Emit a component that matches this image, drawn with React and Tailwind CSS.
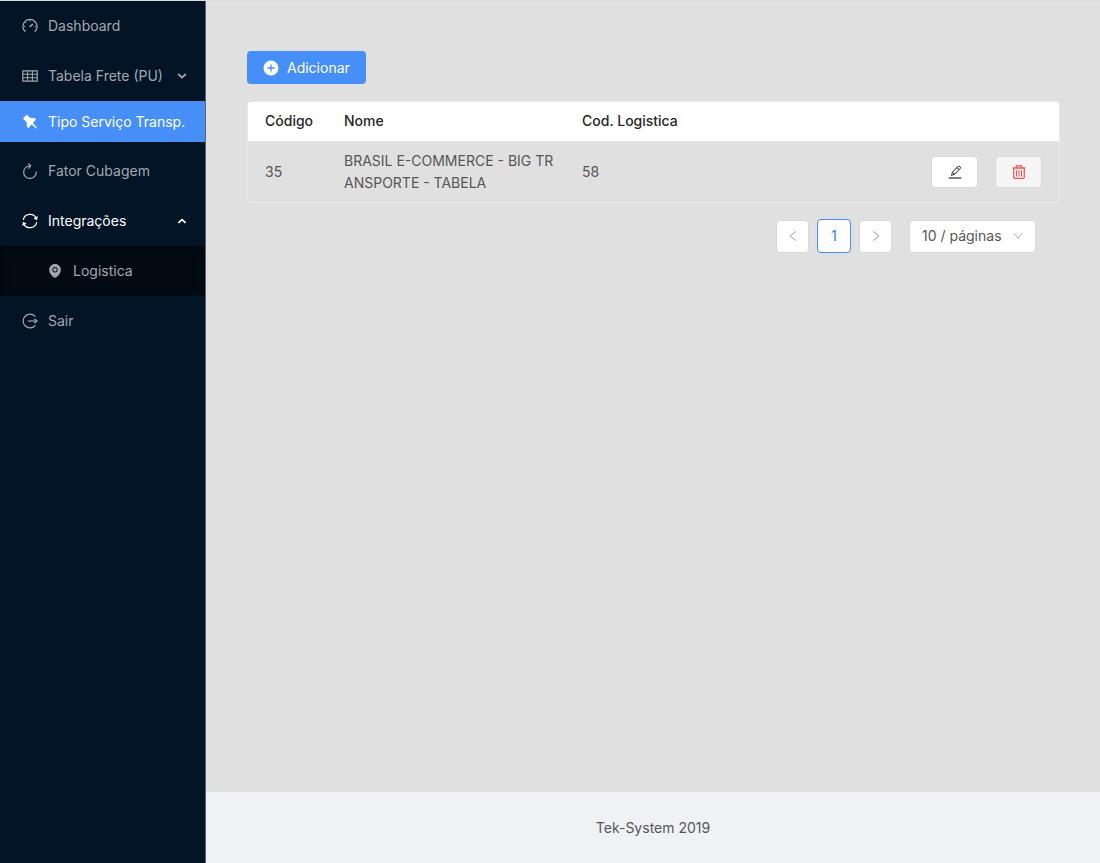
import React, { useState } from 'react';
import { AiFillEnvironment, AiOutlineLeft, AiOutlineRight, AiOutlineDown } from 'react-icons/ai';

const rows = [{ codigo: 35, nome: 'BRASIL E-COMMERCE - BIG TRANSPORTE - TABELA', logistica: 58 }];

function Icon({ children, className = 'size-4' }) {
  return (
    <svg viewBox="0 0 16 16" className={`shrink-0 ${className}`} fill="none" stroke="currentColor" strokeWidth="1.2">
      {children}
    </svg>
  );
}

function DashboardIcon() {
  return (
    <Icon>
      <path d="M3.4 13.9A7.1 7.1 0 1 1 12.6 13.9" />
      <path d="M7.8 8.9L10.8 6" strokeWidth="1.6" />
      <path d="M8 1.8V3.6M1.8 8.5H3.4M12.6 8.5H14.2M3.6 4.1L4.7 5.2M12.4 4.1L11.5 5" strokeWidth="0.9" />
    </Icon>
  );
}

function TableIcon() {
  return (
    <Icon>
      <path d="M0.8 2.8H15.2V13.2H0.8Z" />
      <path d="M0.8 6.2H15.2M0.8 9.7H15.2M5.6 2.8V13.2M10.4 2.8V13.2" strokeWidth="1" />
    </Icon>
  );
}

function PinIcon() {
  return (
    <Icon>
      <path
        d="M5.2 1.1L7.9 3.8L11.8 4.1Q13.8 4.2 13.9 5.4L11 8.9L14.9 13.7L14.2 14.4L9.6 10.6L6.4 13.9Q4.9 13.6 4.8 11.8L4.6 7.9L1.4 4.9Q1 4.2 1.7 3.6L4.1 1.2Q4.7 0.7 5.2 1.1Z"
        fill="currentColor"
        stroke="none"
      />
    </Icon>
  );
}

function ReloadIcon() {
  return (
    <Icon>
      <path d="M14.2 8.6A6.3 6.3 0 1 1 8.6 2.9" />
      <path d="M6.2 0.5L8.8 2.9L6.4 5.5" />
    </Icon>
  );
}

function SyncIcon() {
  return (
    <Icon>
      <path d="M1.3 6.8A6.9 6.9 0 0 1 14.1 4.9" />
      <path d="M14.7 9.2A6.9 6.9 0 0 1 1.9 11.1" />
      <path d="M15.8 3L15 7.2L11.4 5.4ZM0.2 13L1 8.8L4.6 10.6Z" fill="currentColor" stroke="none" />
    </Icon>
  );
}

function LogoutIcon() {
  return (
    <Icon>
      <path d="M13.4 3.6A6.9 6.9 0 1 0 13.4 12.4" />
      <path d="M5.8 8H14.6" />
      <path d="M12.4 5.8L15 8L12.4 10.2" />
    </Icon>
  );
}

function PlusCircleIcon() {
  return (
    <svg viewBox="0 0 16 16" className="size-4 shrink-0">
      <circle cx="8" cy="8" r="7.5" fill="currentColor" />
      <path d="M8 4.4V11.6M4.4 8H11.6" stroke="#478ff8" strokeWidth="1.3" />
    </svg>
  );
}

function EditIcon() {
  return (
    <Icon className="size-3.5">
      <path d="M0.8 14.9H15.2" strokeWidth="1.6" />
      <path d="M4 11.8L5 8.2L11.6 1.6Q12.4 0.9 13.2 1.6L14 2.4Q14.7 3.2 14 4L7.4 10.6Z" />
      <path d="M10.2 3L12.6 5.4M5 8.2L7.4 10.6" />
    </Icon>
  );
}

function TrashIcon() {
  return (
    <Icon className="size-3.5">
      <path d="M0.8 3.4H15.2" strokeWidth="1.6" />
      <path d="M5 3V1H11V3" strokeWidth="1.4" />
      <path d="M2 3.6V14Q2 15.2 3 15.2H13Q14 15.2 14 14V3.6" strokeWidth="1.4" />
      <path d="M5.2 6V13M8 6V13M10.8 6V13" />
    </Icon>
  );
}

function Caret({ up }) {
  return (
    <svg viewBox="0 0 10 10" className="ml-auto size-2.5 shrink-0" fill="none" stroke="currentColor" strokeWidth="1.8">
      <path d={up ? 'M1.4 6.8L5 3.6L8.6 6.8' : 'M1.2 3L5 6.6L8.8 3'} />
    </svg>
  );
}

function MenuLink({ icon, children, className = '' }) {
  return (
    <a href="#" className={`flex items-center gap-2.5 whitespace-nowrap ${className}`}>
      {icon}
      {children}
    </a>
  );
}

export default function App() {
  const [open, setOpen] = useState(true);
  const [pageSize, setPageSize] = useState('10');

  return (
    <div className="flex min-h-screen border-t border-[#dcdedd] bg-[#e0e0e0] font-['Inter','Liberation_Sans',sans-serif] text-sm text-[#565656]">
      {/* Menu lateral */}
      <nav className="w-[206px] shrink-0 border-r border-[#5b6675] bg-[#031427] pt-1 text-[#a3a8af]">
        <MenuLink className="mb-2 h-[42px] pl-[22px]" icon={<DashboardIcon />}>
          Dashboard
        </MenuLink>
        <button type="button" className="mb-1 flex h-[42px] w-full items-center gap-2.5 pr-[18px] pl-[22px] whitespace-nowrap">
          <TableIcon />
          Tabela Frete (PU)
          <Caret />
        </button>
        <MenuLink className="mb-2 h-[41px] bg-[#478ff8] pl-[22px] text-white" icon={<PinIcon />}>
          Tipo Serviço Transp.
        </MenuLink>
        <MenuLink className="mb-2 h-[42px] pl-[22px]" icon={<ReloadIcon />}>
          Fator Cubagem
        </MenuLink>
        <button
          type="button"
          onClick={() => setOpen(!open)}
          className="mb-1 flex h-[42px] w-full items-center gap-2.5 pr-[18px] pl-[22px] whitespace-nowrap text-white"
        >
          <SyncIcon />
          Integrações
          <Caret up={open} />
        </button>
        {open && (
          <div className="bg-[#020b14] py-1 shadow-[inset_0_2px_8px_rgba(0,0,0,0.45)]">
            <MenuLink className="h-[42px] pl-[47px]" icon={<AiFillEnvironment className="size-4" />}>
              Logistica
            </MenuLink>
          </div>
        )}
        <MenuLink className="mt-1 h-[42px] pl-[22px]" icon={<LogoutIcon />}>
          Sair
        </MenuLink>
      </nav>

      <div className="flex min-w-0 grow flex-col">
        <main className="grow pt-[50px] pr-10 pl-[41px]">
          <button type="button" className="flex h-[33px] items-center gap-2 rounded bg-[#478ff8] px-4 text-white">
            <PlusCircleIcon />
            Adicionar
          </button>

          <div className="mt-[17px] overflow-hidden rounded border border-[#e8e8e8]">
            <table className="w-full table-fixed text-left">
              <thead className="bg-white text-[#262626]">
                <tr className="h-[39px] border-b border-[#e8e8e8]">
                  <th className="w-[79px] pl-[17px] font-medium">Código</th>
                  <th className="w-[238px] pl-[17px] font-medium">Nome</th>
                  <th className="pl-[17px] font-medium">Cod. Logistica</th>
                  <th className="w-[145px]" aria-label="Ações"></th>
                </tr>
              </thead>
              <tbody>
                {rows.map((row) => (
                  <tr key={row.codigo} className="h-[61px]">
                    <td className="pl-[17px]">{row.codigo}</td>
                    <td className="pr-2 pl-[17px] leading-[22px] break-all">{row.nome}</td>
                    <td className="pl-[17px]">{row.logistica}</td>
                    <td className="pr-[17px]">
                      <div className="flex justify-end gap-[17px]">
                        <button type="button" aria-label="Editar" className="flex h-8 w-[47px] items-center justify-center rounded border border-[#d9d9d9] bg-white">
                          <EditIcon />
                        </button>
                        <button type="button" aria-label="Excluir" className="flex h-8 w-[47px] items-center justify-center rounded border border-[#d9d9d9] bg-[#f5f5f5] text-[#ee5253]">
                          <TrashIcon />
                        </button>
                      </div>
                    </td>
                  </tr>
                ))}
              </tbody>
            </table>
          </div>

          {/* Paginação */}
          <div className="mt-4 mr-6 flex items-center justify-end gap-2">
            <button type="button" aria-label="Anterior" className="flex size-[33px] items-center justify-center rounded border border-[#d9d9d9] bg-white text-[#b8b8b8]">
              <AiOutlineLeft className="size-3.5" />
            </button>
            <button type="button" className="size-[34px] rounded border border-[#478ff8] bg-white font-medium text-[#478ff8]">
              1
            </button>
            <button type="button" aria-label="Próxima" className="flex size-[33px] items-center justify-center rounded border border-[#d9d9d9] bg-white text-[#b8b8b8]">
              <AiOutlineRight className="size-3.5" />
            </button>
            <div className="relative ml-[9px]">
              <select
                aria-label="Itens por página"
                value={pageSize}
                onChange={(e) => setPageSize(e.target.value)}
                className="block h-[33px] w-[127px] appearance-none rounded border border-[#d9d9d9] bg-white pl-3"
              >
                <option value="10">10 / páginas</option>
                <option value="20">20 / páginas</option>
                <option value="50">50 / páginas</option>
              </select>
              <AiOutlineDown className="pointer-events-none absolute top-2.5 right-3 size-3 text-[#b8b8b8]" />
            </div>
          </div>
        </main>

        <footer className="bg-[#eff1f5] px-12 pt-[26px] pb-[25px] text-center leading-5">Tek-System 2019</footer>
      </div>
    </div>
  );
}
